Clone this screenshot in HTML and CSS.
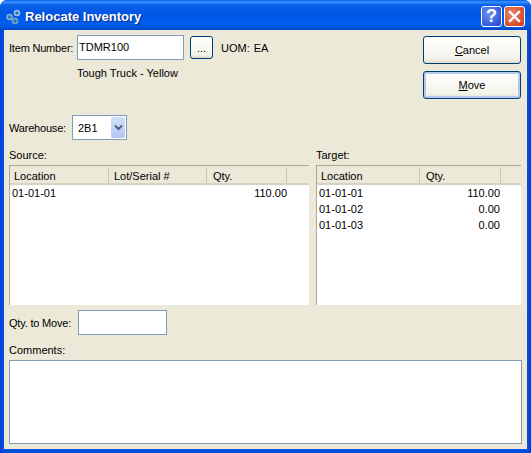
FILE: index.html
```html
<!DOCTYPE html>
<html lang="en">

<head>
    <meta charset="UTF-8">
    <title>Relocate Inventory</title>
    <link rel="stylesheet" href="styles.css">
</head>

<body>
    <div class="window">
        <div class="titlebar">
            <svg class="app-icon" width="16" height="16" viewBox="0 0 16 16">
                <circle cx="3.500" cy="8" r="2.500" fill="#2f78b8" stroke="#7fb2d6" stroke-width="1.500" />
                <circle cx="11" cy="4" r="2.500" fill="#2f78b8" stroke="#9cc4df" stroke-width="1.500" />
                <circle cx="9" cy="12" r="2.500" fill="#2a70b0" stroke="#6fa6cc" stroke-width="1.500" />
            </svg>
            <span class="title">Relocate Inventory</span>
            <div class="caption-btn help">?</div>
            <div class="caption-btn close">
                <svg width="13" height="13" viewBox="0 0 13 13">
                    <path d="M2 2l9 9M11 2l-9 9" stroke="#fff" stroke-width="2.400" stroke-linecap="square" />
                </svg>
            </div>
        </div>

        <div class="content">
            <div class="top">
                <div class="top-left">
                    <div class="item-row">
                        <label class="item-label">Item Number:</label>
                        <div class="field item-field">TDMR100</div>
                        <div class="btn small-btn">...</div>
                        <span class="uom">UOM:</span>
                        <span>EA</span>
                    </div>
                    <div class="item-desc">Tough Truck - Yellow</div>
                    <div class="warehouse-row">
                        <label class="wh-label">Warehouse:</label>
                        <div class="field combo">
                            <span class="combo-text">2B1</span>
                            <div class="combo-arrow">
                                <svg width="9" height="7" viewBox="0 0 9 7">
                                    <path d="M1 1.500l3.500 3.500l3.500-3.500" fill="none" stroke="#4d6185" stroke-width="2" />
                                </svg>
                            </div>
                        </div>
                    </div>
                </div>
                <div class="actions">
                    <div class="btn action-btn"><span><u>C</u>ancel</span></div>
                    <div class="btn action-btn default-btn"><span><u>M</u>ove</span></div>
                </div>
            </div>

            <div class="lists">
                <div class="list-col source">
                    <div class="list-label">Source:</div>
                    <div class="list">
                        <div class="list-head">
                            <div class="th th-loc">Location</div>
                            <div class="th th-lot">Lot/Serial #</div>
                            <div class="th th-qty">Qty.</div>
                            <div class="th th-end"></div>
                        </div>
                        <div class="row">
                            <div class="td-loc">01-01-01</div>
                            <div class="td-lot"></div>
                            <div class="td-qty">110.00</div>
                        </div>
                    </div>
                </div>
                <div class="list-col target">
                    <div class="list-label">Target:</div>
                    <div class="list">
                        <div class="list-head">
                            <div class="th th-loc">Location</div>
                            <div class="th th-qty">Qty.</div>
                            <div class="th th-end"></div>
                        </div>
                        <div class="row">
                            <div class="td-loc">01-01-01</div>
                            <div class="td-qty">110.00</div>
                        </div>
                        <div class="row">
                            <div class="td-loc">01-01-02</div>
                            <div class="td-qty">0.00</div>
                        </div>
                        <div class="row">
                            <div class="td-loc">01-01-03</div>
                            <div class="td-qty">0.00</div>
                        </div>
                    </div>
                </div>
            </div>

            <div class="move-row">
                <label class="move-label">Qty. to Move:</label>
                <div class="field move-field"></div>
            </div>
            <div class="comments-label">Comments:</div>
            <div class="field comments"></div>
        </div>
    </div>
</body>

</html>
```

FILE: styles.css
```css
* {
    padding: 0;
    margin: 0;
    box-sizing: border-box;
}

body {
    width: 531px;
    height: 453px;
    overflow: hidden;
    font: 11px "Liberation Sans", Arial, sans-serif;
    color: #000;
}

label {
    white-space: nowrap;
    letter-spacing: -0.2px;
}

.window {
    width: 531px;
    height: 453px;
    display: flex;
    flex-direction: column;
    background: linear-gradient(to right, #0831d9, #0050e0 2px, #0050e0 528px, #0831d9);
    border-radius: 7px 7px 0 0;
}

.titlebar {
    height: 30px;
    flex: none;
    display: flex;
    align-items: center;
    padding: 3px 6px 0 6px;
    border-radius: 7px 7px 0 0;
    background: linear-gradient(to bottom, #0058e6 0, #3a93ff 2px, #0a5fe8 5px, #0055e5 14px, #0260ee 22px, #0058e0 27px, #0044c8 30px);
}

.app-icon {
    margin-right: 3px;
}

.title {
    flex: 1;
    font-weight: bold;
    font-size: 13px;
    color: #fff;
    text-shadow: 1px 1px 1px #0a2a8a;
}

.caption-btn {
    width: 21px;
    height: 21px;
    border: 1px solid #fff;
    border-radius: 3px;
    display: flex;
    align-items: center;
    justify-content: center;
    color: #fff;
}

.help {
    margin-right: 2px;
    font: bold 18px "Liberation Sans", sans-serif;
    background: radial-gradient(circle at 35% 35%, #6d92f0, #2a52d8 80%);
}

.close {
    background: radial-gradient(circle at 35% 35%, #e8896a, #d4441f 80%);
}

.content {
    flex: 1;
    margin: 0 4px 4px;
    padding: 5px 5px 5px;
    display: flex;
    flex-direction: column;
    background-color: #ece9d8;
}

.top {
    display: flex;
    justify-content: space-between;
}

.item-row {
    display: flex;
    align-items: center;
    height: 25px;
}

.item-label {
    width: 68px;
}

.field {
    background-color: #fff;
    border: 1px solid #7f9db9;
}

.item-field {
    width: 107px;
    height: 25px;
    line-height: 23px;
    padding-left: 1px;
}

.btn {
    display: flex;
    align-items: center;
    justify-content: center;
    border: 1px solid #003c74;
    border-radius: 3px;
    background: linear-gradient(to bottom, #fff, #f3f2ea 85%, #dcd8ca);
}

.small-btn {
    width: 23px;
    height: 23px;
    margin: 0 8px 0 6px;
}

.uom {
    margin-right: 4px;
}

.item-desc {
    margin: 6px 0 0 68px;
    height: 14px;
    line-height: 14px;
}

.warehouse-row {
    margin-top: 35px;
    display: flex;
    align-items: center;
}

.wh-label {
    width: 63px;
}

.combo {
    width: 55px;
    height: 25px;
    padding: 1px;
    display: flex;
    align-items: center;
}

.combo-text {
    flex: 1;
    padding-left: 4px;
}

.combo-arrow {
    width: 14px;
    height: 21px;
    display: flex;
    align-items: center;
    justify-content: center;
    border-radius: 2px;
    background: linear-gradient(to bottom, #d3dffa, #b4c6f3);
}

.actions {
    margin-top: 1px;
    margin-right: 1px;
    display: flex;
    flex-direction: column;
    gap: 7px;
}

.action-btn {
    width: 98px;
    height: 28px;
}

.default-btn {
    box-shadow: inset 0 0 0 2px #b5c9ee;
}

.lists {
    margin-top: 8px;
    display: flex;
    gap: 7px;
}

.list-col {
    display: flex;
    flex-direction: column;
}

.source {
    width: 300px;
}

.target {
    width: 205px;
}

.list-label {
    height: 17px;
    line-height: 15px;
}

.list {
    height: 140px;
    background-color: #fff;
    border-top: 1px solid #aca899;
    border-left: 1px solid #aca899;
    overflow: hidden;
}

.list-head {
    display: flex;
    height: 19px;
    background-color: #ece9d8;
    border-bottom: 2px solid #d6d2c2;
}

.th {
    padding-left: 4px;
    line-height: 16px;
    height: 15px;
    margin-top: 2px;
    border-right: 1px solid #c9c6b6;
    overflow: hidden;
}

.source .th-loc {
    width: 99px;
}

.source .th-lot {
    width: 98px;
    padding-left: 5px;
}

.source .th-qty {
    width: 80px;
    padding-left: 6px;
}

.target .th-loc {
    width: 103px;
}

.target .th-qty {
    width: 81px;
    padding-left: 6px;
}

.th-end {
    flex: 1;
    border-right: none;
}

.row {
    display: flex;
    height: 16px;
    line-height: 16px;
    padding-left: 2px;
}

.source .td-loc {
    width: 97px;
}

.td-lot {
    width: 98px;
}

.td-qty {
    width: 80px;
    text-align: right;
}

.target .td-loc {
    width: 101px;
}

.move-row {
    margin-top: 5px;
    display: flex;
    align-items: center;
}

.move-label {
    width: 69px;
}

.move-field {
    width: 89px;
    height: 25px;
}

.comments-label {
    margin-top: 7px;
    height: 18px;
    line-height: 17px;
}

.comments {
    height: 84px;
}
```
